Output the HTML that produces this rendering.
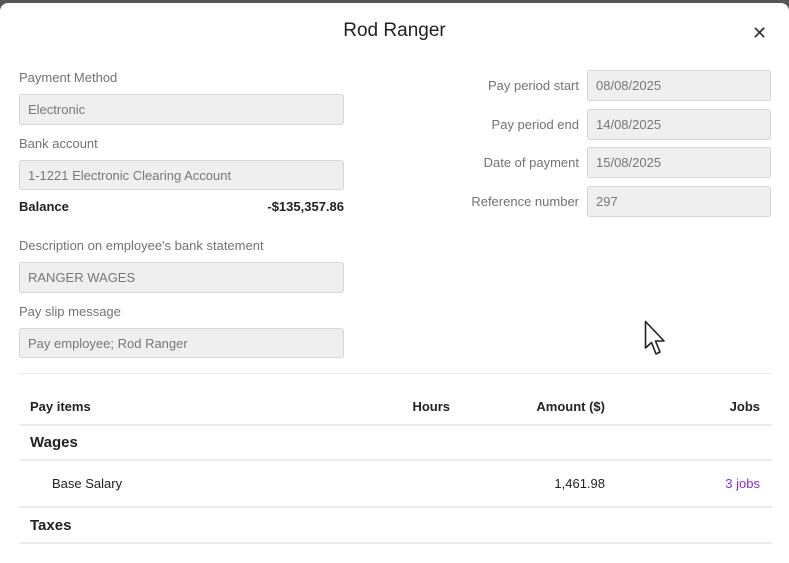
<!DOCTYPE html>
<html><head><meta charset="utf-8"><style>
body{margin:0;width:789px;height:553px;overflow:hidden;background:#555;font-family:"Liberation Sans",sans-serif;}
.m{position:absolute;left:0;top:3px;width:789px;height:560px;background:#fff;border-radius:8px 8px 0 0;}
.a{position:absolute;}
.lbl{color:#737373;font-size:13px;}
.in{position:absolute;background:#efefef;border:1px solid #d6d6d6;border-radius:3px;box-sizing:border-box;color:#777;font-size:13px;padding-left:8px;display:flex;align-items:center;}
.r{text-align:right;}
.hr{position:absolute;left:19px;width:753px;height:1px;background:#ebebeb;}
.th{font-size:13px;font-weight:bold;color:#222;}
</style></head><body>
<div class="m"></div>
<div class="a" style="left:0;top:20px;width:789px;text-align:center;font-size:19px;color:#222;">Rod Ranger</div>
<div class="a" style="left:752px;top:23px;font-size:18px;color:#333;">✕</div>

<div class="a lbl" style="left:19px;top:70px;">Payment Method</div>
<div class="in" style="left:19px;top:94px;width:325px;height:31px;">Electronic</div>
<div class="a lbl" style="left:19px;top:136px;">Bank account</div>
<div class="in" style="left:19px;top:160px;width:325px;height:30px;">1-1221 Electronic Clearing Account</div>
<div class="a" style="left:19px;top:199px;font-size:13px;font-weight:bold;color:#222;">Balance</div>
<div class="a" style="left:200px;width:144px;top:199px;font-size:13px;font-weight:bold;color:#222;text-align:right;">-$135,357.86</div>
<div class="a lbl" style="left:19px;top:238px;">Description on employee's bank statement</div>
<div class="in" style="left:19px;top:262px;width:325px;height:31px;">RANGER WAGES</div>
<div class="a lbl" style="left:19px;top:304px;">Pay slip message</div>
<div class="in" style="left:19px;top:328px;width:325px;height:30px;">Pay employee; Rod Ranger</div>

<div class="a lbl r" style="left:400px;width:179px;top:78px;">Pay period start</div>
<div class="in" style="left:587px;top:70px;width:184px;height:31px;">08/08/2025</div>
<div class="a lbl r" style="left:400px;width:179px;top:117px;">Pay period end</div>
<div class="in" style="left:587px;top:109px;width:184px;height:31px;">14/08/2025</div>
<div class="a lbl r" style="left:400px;width:179px;top:155px;">Date of payment</div>
<div class="in" style="left:587px;top:147px;width:184px;height:31px;">15/08/2025</div>
<div class="a lbl r" style="left:400px;width:179px;top:194px;">Reference number</div>
<div class="in" style="left:587px;top:186px;width:184px;height:31px;">297</div>

<svg class="a" style="left:644px;top:320px" width="24" height="38" viewBox="0 0 24 38"><path d="M1.5 1.5 L1.5 28 L7.5 22.5 L12 34 L16 32 L11.5 21 L20 21 Z" fill="#fff" stroke="#222" stroke-width="1.6" stroke-linejoin="round"/></svg>

<div class="hr" style="top:373px;"></div>
<div class="a th" style="left:30px;top:399px;">Pay items</div>
<div class="a th" style="left:390px;width:60px;top:399px;text-align:right;">Hours</div>
<div class="a th" style="left:480px;width:125px;top:399px;text-align:right;">Amount ($)</div>
<div class="a th" style="left:680px;width:80px;top:399px;text-align:right;">Jobs</div>
<div class="hr" style="top:424px;height:2px;"></div>
<div class="a" style="left:30px;top:434px;font-size:15px;font-weight:bold;color:#222;">Wages</div>
<div class="hr" style="top:459px;height:2px;"></div>
<div class="a" style="left:52px;top:476px;font-size:13px;color:#222;">Base Salary</div>
<div class="a" style="left:480px;width:125px;top:476px;font-size:13px;color:#222;text-align:right;">1,461.98</div>
<div class="a" style="left:680px;width:80px;top:476px;font-size:13px;color:#8a2be2;text-align:right;">3 jobs</div>
<div class="hr" style="top:506px;height:2px;"></div>
<div class="a" style="left:30px;top:517px;font-size:15px;font-weight:bold;color:#222;">Taxes</div>
<div class="hr" style="top:542px;height:2px;"></div>
</body></html>
